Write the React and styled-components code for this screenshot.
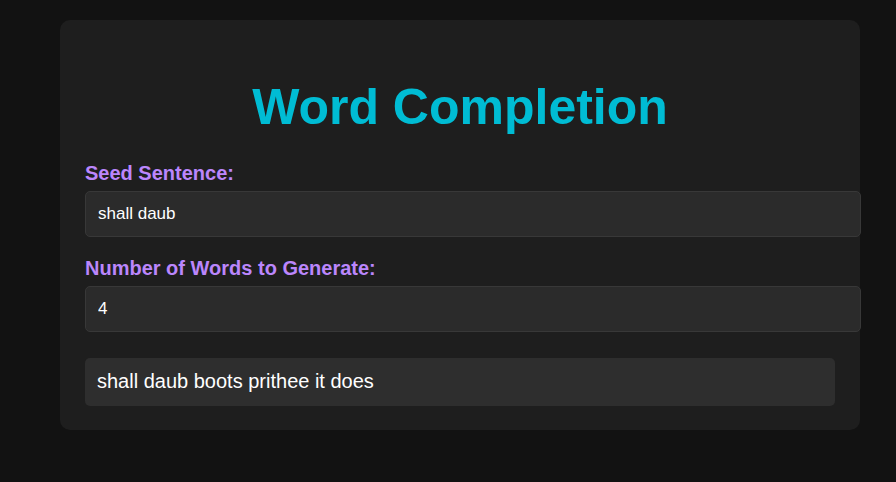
import { useState } from "react";
import styled, { createGlobalStyle } from "styled-components";

const GlobalStyle = createGlobalStyle`
  body {
    margin: 0;
    background-color: #121212;
    font-family: "Liberation Sans", Arial, sans-serif;
  }
`;

export default function App() {
  const [seed, setSeed] = useState("shall daub");
  const [count, setCount] = useState(4);

  return (
    <>
      <GlobalStyle />
      <Card>
        <Title>Word Completion</Title>
        <Label htmlFor="seed">Seed Sentence:</Label>
        <Input
          id="seed"
          type="text"
          value={seed}
          onChange={(e) => setSeed(e.target.value)}
        />
        <Label htmlFor="count" $gap>
          Number of Words to Generate:
        </Label>
        <Input
          id="count"
          type="number"
          value={count}
          onChange={(e) => setCount(e.target.value)}
        />
        <Result>shall daub boots prithee it does</Result>
      </Card>
    </>
  );
}

const Card = styled.div`
  width: 750px;
  margin: 20px 0 0 60px;
  padding: 25px 25px 24px;
  background-color: #1e1e1e;
  border-radius: 10px;
`;

const Title = styled.h1`
  margin: 33px 0 26px;
  text-align: center;
  color: #00bcd4;
  font-size: 50px;
  font-weight: bold;
`;

const Label = styled.label`
  display: block;
  margin-top: ${(p) => (p.$gap ? "20px" : "0")};
  margin-bottom: 6px;
  color: #bb86fc;
  font-size: 20px;
  font-weight: bold;
`;

const Input = styled.input`
  display: block;
  width: 100%;
  height: 20px;
  padding: 12px;
  border: 1px solid #383838;
  border-radius: 5px;
  background-color: #2b2b2b;
  color: #fff;
  font-family: "Liberation Sans", Arial, sans-serif;
  font-size: 17px;
  appearance: textfield;
  &::-webkit-inner-spin-button,
  &::-webkit-outer-spin-button {
    -webkit-appearance: none;
    margin: 0;
  }
  &:focus {
    outline: none;
  }
`;

const Result = styled.div`
  margin-top: 26px;
  padding: 12px 12px 13px;
  border-radius: 5px;
  background-color: #2e2e2e;
  color: #fff;
  font-size: 20px;
`;
